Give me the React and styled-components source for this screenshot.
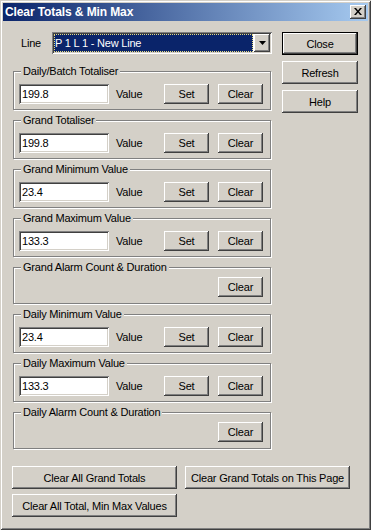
import React from 'react'
import styled, { createGlobalStyle, css } from 'styled-components'

const face = '#D4D0C8'
const raised = css`
    box-shadow: inset -1px -1px 0 #404040, inset 1px 1px 0 #fff, inset -2px -2px 0 #808080;
`
const sunken = css`
    box-shadow: inset 1px 1px 0 #808080, inset -1px -1px 0 #fff, inset 2px 2px 0 #404040, inset -2px -2px 0 ${face};
`

const GlobalStyle = createGlobalStyle`
    html, body {
        margin: 0;
        padding: 0;
        background: ${face};
    }
    body {
        font-family: "Liberation Sans", Arial, sans-serif;
        font-size: 11px;
        letter-spacing: -0.2px;
        color: #000;
    }
`

const Window = styled.div`
    box-sizing: border-box;
    width: 371px;
    height: 530px;
    padding: 3px;
    background: ${face};
    box-shadow: inset 1px 1px 0 ${face}, inset -1px -1px 0 #404040, inset 2px 2px 0 #fff, inset -2px -2px 0 #808080;
    display: flex;
    flex-direction: column;
`

const TitleBar = styled.div`
    height: 18px;
    display: flex;
    align-items: center;
    justify-content: space-between;
    padding: 0 2px;
    background: linear-gradient(to right, #0A246A, #A6CAF0);
    color: #fff;
    font-weight: bold;
    font-size: 12px;
    letter-spacing: -0.1px;
`

const TitleButton = styled.div`
    box-sizing: border-box;
    width: 16px;
    height: 14px;
    background: ${face};
    ${raised};
    display: flex;
    align-items: center;
    justify-content: center;
    padding-bottom: 1px;
`

const Content = styled.div`
    padding: 11px 0 0 9px;
`

const MainRow = styled.div`
    display: flex;
    gap: 10px;
`

const LeftColumn = styled.div`
    width: 259px;
    margin-left: 1px;
`

const RightColumn = styled.div`
    display: flex;
    flex-direction: column;
    gap: 6px;
`

const LineRow = styled.div`
    display: flex;
    align-items: center;
    height: 22px;
`

const LineLabel = styled.span`
    width: 31px;
    padding-left: 8px;
`

const Combo = styled.div`
    box-sizing: border-box;
    width: 220px;
    height: 22px;
    padding: 2px;
    display: flex;
    background: #fff;
    ${sunken};
`

const ComboValue = styled.div`
    flex: 1;
    margin-right: 1px;
    display: flex;
    align-items: center;
    padding-left: 0;
    background: #0A246A;
    color: #fff;
    border: 1px dotted #E8DC80;
`

const DropButton = styled.div`
    box-sizing: border-box;
    width: 16px;
    height: 18px;
    background: ${face};
    ${raised};
    display: flex;
    align-items: center;
    justify-content: center;
`

const Groups = styled.div`
    display: flex;
    flex-direction: column;
    gap: 10px;
    margin-top: 17px;
`

const Group = styled.div`
    box-sizing: border-box;
    width: 258px;
    height: ${p => (p.$short ? 37 : 39)}px;
    border: 1px solid #808080;
    box-shadow: inset 1px 1px 0 #fff, 1px 1px 0 #fff;
    padding-right: 7px;
`

const Legend = styled.div`
    width: fit-content;
    margin: -7px 0 0 7px;
    padding: 0 2px;
    line-height: 13px;
    background: ${face};
`

const Row = styled.div`
    display: flex;
    align-items: center;
    justify-content: ${p => (p.$end ? 'flex-end' : 'flex-start')};
    margin-top: ${p => (p.$end ? 3 : 6)}px;
    padding-left: 5px;
`

const ValueInput = styled.input`
    box-sizing: border-box;
    width: 90px;
    height: 20px;
    border: none;
    outline: none;
    padding: 0 3px;
    background: #fff;
    ${sunken};
    font: inherit;
    letter-spacing: inherit;
`

const ValueLabel = styled.span`
    width: 48px;
    margin-left: 7px;
`

const Button = styled.button`
    box-sizing: border-box;
    width: ${p => p.$w}px;
    height: ${p => p.$h}px;
    margin: 0;
    padding: 0;
    background: ${face};
    border: ${p => (p.$default ? '1px solid #000' : 'none')};
    ${raised};
    font: inherit;
    letter-spacing: inherit;
    color: #000;
`

const SmallButtons = styled.div`
    display: flex;
    gap: 9px;
`

const BottomButtons = styled.div`
    display: grid;
    grid-template-columns: 165px 165px;
    column-gap: 8px;
    row-gap: 5px;
    margin-top: 17px;
`

const groups = [
    { title: 'Daily/Batch Totaliser', value: '199.8' },
    { title: 'Grand Totaliser', value: '199.8' },
    { title: 'Grand Minimum Value', value: '23.4' },
    { title: 'Grand Maximum Value', value: '133.3' },
    { title: 'Grand Alarm Count & Duration' },
    { title: 'Daily Minimum Value', value: '23.4' },
    { title: 'Daily Maximum Value', value: '133.3' },
    { title: 'Daily Alarm Count & Duration' },
]

const App = () => {
    return (
        <Window>
            <GlobalStyle />
            <TitleBar>
                <span>Clear Totals &amp; Min Max</span>
                <TitleButton>
                    <svg width="8" height="7" viewBox="0 0 8 7">
                        <path d="M0 0h2l2 2.5L6 0h2L5 3.5 8 7H6L4 4.5 2 7H0l3-3.5z" fill="#000" />
                    </svg>
                </TitleButton>
            </TitleBar>
            <Content>
                <MainRow>
                    <LeftColumn>
                        <LineRow>
                            <LineLabel>Line</LineLabel>
                            <Combo>
                                <ComboValue>P 1 L 1 - New Line</ComboValue>
                                <DropButton>
                                    <svg width="7" height="4" viewBox="0 0 7 4">
                                        <path d="M0 0h7L3.5 4z" fill="#000" />
                                    </svg>
                                </DropButton>
                            </Combo>
                        </LineRow>
                        <Groups>
                            {groups.map(g => (
                                <Group key={g.title} $short={!g.value}>
                                    <Legend>{g.title}</Legend>
                                    {g.value ? (
                                        <Row>
                                            <ValueInput defaultValue={g.value} />
                                            <ValueLabel>Value</ValueLabel>
                                            <SmallButtons>
                                                <Button $w={45} $h={20}>Set</Button>
                                                <Button $w={45} $h={20}>Clear</Button>
                                            </SmallButtons>
                                        </Row>
                                    ) : (
                                        <Row $end>
                                            <Button $w={45} $h={20}>Clear</Button>
                                        </Row>
                                    )}
                                </Group>
                            ))}
                        </Groups>
                    </LeftColumn>
                    <RightColumn>
                        <Button $w={76} $h={23} $default>Close</Button>
                        <Button $w={76} $h={23}>Refresh</Button>
                        <Button $w={76} $h={23}>Help</Button>
                    </RightColumn>
                </MainRow>
                <BottomButtons>
                    <Button $w={165} $h={23}>Clear All Grand Totals</Button>
                    <Button $w={165} $h={23}>Clear Grand Totals on This Page</Button>
                    <Button $w={165} $h={23}>Clear All Total, Min Max Values</Button>
                </BottomButtons>
            </Content>
        </Window>
    )
}

export default App
